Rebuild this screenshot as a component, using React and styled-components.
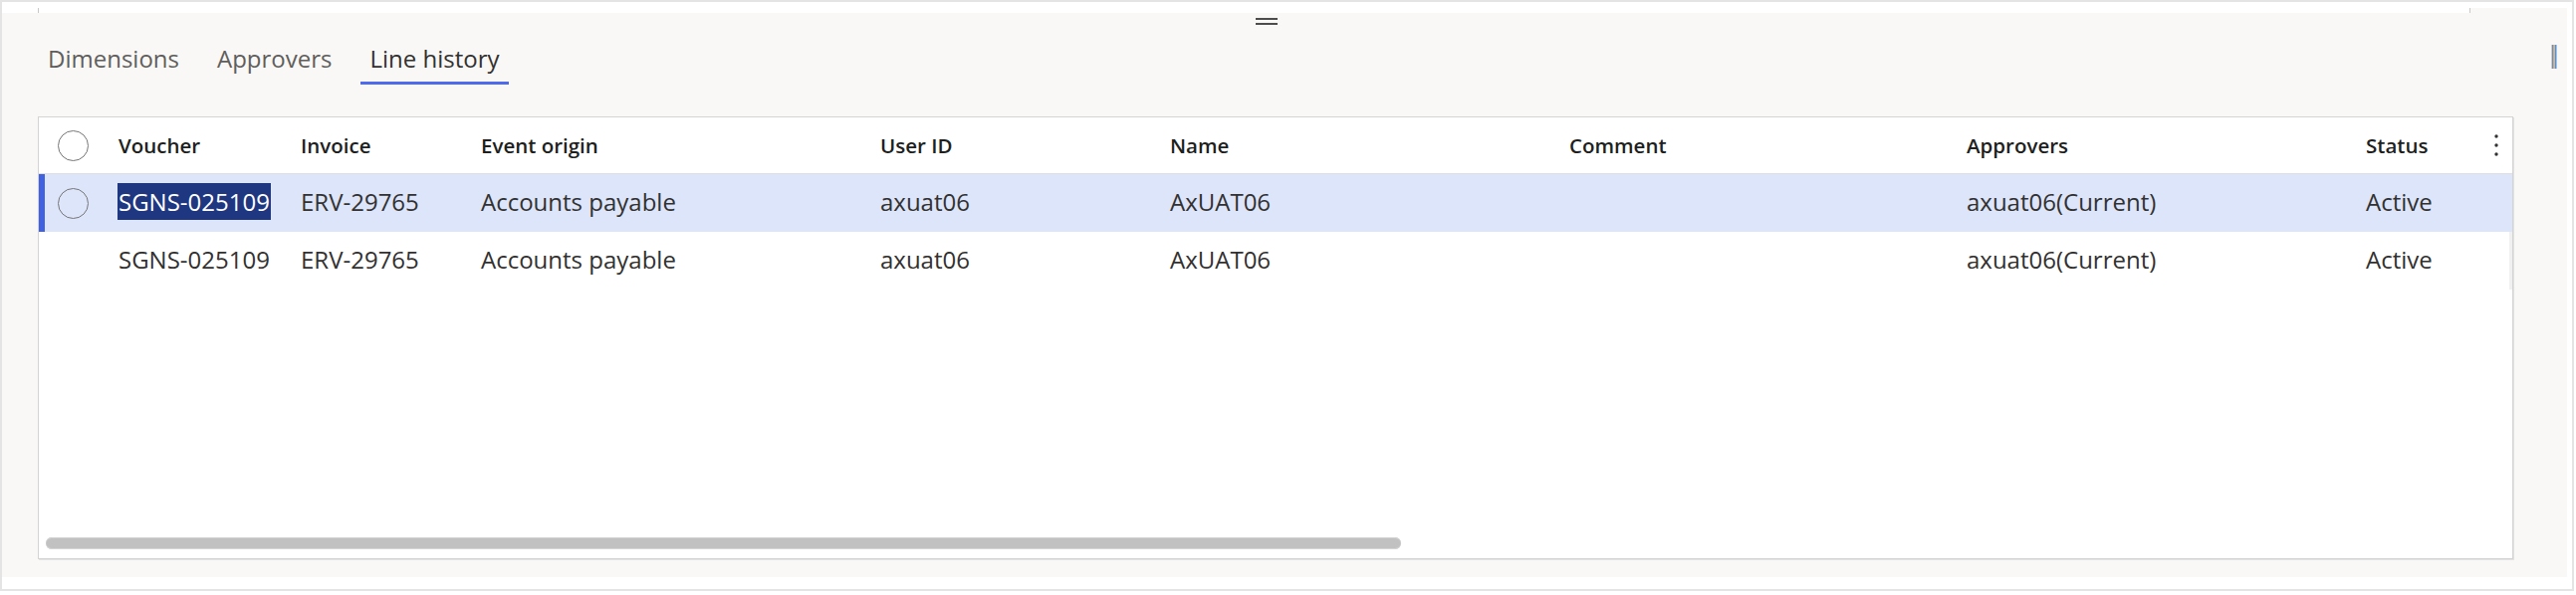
import React from 'react'
import styled, { createGlobalStyle } from 'styled-components'

const GlobalStyle = createGlobalStyle`
  body {
    margin: 0;
    background: #ffffff;
    font-family: 'Open Sans', 'Noto Sans', sans-serif;
  }
`

const Frame = styled.div`
  box-sizing: border-box;
  width: 2585px;
  height: 594px;
  border: 2px solid #e4e4e4;
  background: #ffffff;
  display: flex;
  flex-direction: column;
  padding-bottom: 12px;
`

const TopStrip = styled.div`
  height: 11px;
  display: flex;
  flex-shrink: 0;
`

const StripLead = styled.div`
  width: 36px;
  background: #ffffff;
`

const StripMid = styled.div`
  width: 2443px;
  background: #ffffff;
  display: flex;
  align-items: flex-end;
  justify-content: space-between;
`

const Tick = styled.div`
  width: 1px;
  height: 5px;
  background: #c8c8c8;
`

const StripTail = styled.div`
  flex: 1;
  margin-right: 5px;
  background: linear-gradient(#ffffff 6px, #f9f8f6 6px);
`

const Panel = styled.div`
  flex: 1;
  margin-right: 5px;
  background: #f9f8f6;
  display: flex;
  padding-left: 36px;
`

const Main = styled.div`
  width: 2486px;
  display: flex;
  flex-direction: column;
`

const Side = styled.div`
  width: 54px;
  padding: 32px 0 0 38px;
  box-sizing: border-box;
`

const HandleRow = styled.div`
  height: 25px;
  display: flex;
  justify-content: center;
  padding-right: 18px;
`

const Handle = styled.div`
  width: 22px;
  height: 3px;
  margin-top: 5px;
  border-top: 2px solid #4d4d4d;
  border-bottom: 2px solid #4d4d4d;
`

const Tabs = styled.div`
  height: 47px;
  display: flex;
  gap: 20px;
  margin-left: 1px;
`

const Tab = styled.div`
  padding: 0 9px 3px;
  height: 44px;
  box-sizing: border-box;
  display: flex;
  align-items: center;
  font-size: 24px;
  color: ${p => (p.active ? '#323130' : '#605e5c')};
  border-bottom: 3px solid ${p => (p.active ? '#4f6bed' : 'transparent')};
  box-sizing: content-box;
  height: 41px;
`

const Grid = styled.div`
  margin-top: 32px;
  margin-bottom: 18px;
  flex: 1;
  background: #ffffff;
  border: 1px solid #d4d4d4;
  box-shadow: 1px 1px 0 #e2e2e2;
  display: flex;
  flex-direction: column;
  overflow: hidden;
`

const cols = '66px 183px 181px 401px 291px 401px 399px 401px 1fr'

const HeaderRow = styled.div`
  display: grid;
  grid-template-columns: ${cols};
  height: 56px;
  border-bottom: 1px solid #e1dfdd;
  align-items: center;
  font-size: 20.5px;
  font-weight: 600;
  color: #201f1e;
`

const Row = styled.div`
  display: grid;
  grid-template-columns: ${cols};
  height: 58px;
  box-sizing: border-box;
  padding-bottom: 3px;
  align-items: center;
  font-size: 24px;
  color: #323130;
  background: ${p => (p.selected ? '#dde5fa' : '#ffffff')};
  box-shadow: ${p => (p.selected ? 'inset 6px 0 0 #4062e0' : 'inset -3px 0 0 #f0f0f0')};
`

const Cell = styled.div`
  padding-left: 14px;
  white-space: nowrap;
  display: flex;
  align-items: center;
  justify-content: ${p => (p.spread ? 'space-between' : 'flex-start')};
  padding-right: ${p => (p.spread ? '13px' : '0')};
`

const CheckCell = styled.div`
  display: flex;
  justify-content: center;
  padding-left: 2px;
  margin-top: ${p => (p.lift ? '3px' : '0')};
`

const Circle = styled.div`
  width: 31px;
  height: 31px;
  border-radius: 50%;
  border: 1.5px solid #767676;
  box-sizing: border-box;
  visibility: ${p => (p.hidden ? 'hidden' : 'visible')};
`

const Selected = styled.span`
  background: #1f3680;
  color: #ffffff;
  line-height: 37px;
  padding: 0 1px;
  margin-left: -1px;
`

const Spacer = styled.div`
  flex: 1;
`

const Scrollbar = styled.div`
  height: 12px;
  width: 1361px;
  margin: 0 0 9px 7px;
  border-radius: 6px;
  background: #c1c1c1;
  box-shadow: inset 0 1px 0 #d4d4d4, inset 0 -1px 0 #d4d4d4;
`

const MoreIcon = () => (
  <svg width="6" height="24" viewBox="0 0 6 24">
    <circle cx="3" cy="3" r="1.7" fill="#323130" />
    <circle cx="3" cy="12" r="1.7" fill="#323130" />
    <circle cx="3" cy="21" r="1.7" fill="#323130" />
  </svg>
)

const PaneIcon = () => (
  <svg width="8" height="24" viewBox="0 0 8 24">
    <rect x="0" y="0" width="1" height="24" fill="#e8c9a4" />
    <rect x="1" y="0" width="1" height="24" fill="#5f8fc8" />
    <rect x="2" y="0" width="1" height="24" fill="#9fb6d2" />
    <rect x="3" y="0" width="1" height="24" fill="#d9b48a" />
    <rect x="4" y="0" width="1" height="24" fill="#5a8fcc" />
    <rect x="5" y="0" width="1" height="24" fill="#a7c4e4" />
  </svg>
)

const rows = [
  { voucher: 'SGNS-025109', invoice: 'ERV-29765', origin: 'Accounts payable', user: 'axuat06', name: 'AxUAT06', comment: '', approvers: 'axuat06(Current)', status: 'Active', selected: true },
  { voucher: 'SGNS-025109', invoice: 'ERV-29765', origin: 'Accounts payable', user: 'axuat06', name: 'AxUAT06', comment: '', approvers: 'axuat06(Current)', status: 'Active' },
]

export default function App() {
  return (
    <>
      <GlobalStyle />
      <Frame>
        <TopStrip>
          <StripLead />
          <StripMid>
            <Tick />
            <Tick />
          </StripMid>
          <StripTail />
        </TopStrip>
        <Panel>
          <Main>
            <HandleRow>
              <Handle />
            </HandleRow>
            <Tabs>
              <Tab>Dimensions</Tab>
              <Tab>Approvers</Tab>
              <Tab active>Line history</Tab>
            </Tabs>
            <Grid>
              <HeaderRow>
                <CheckCell>
                  <Circle />
                </CheckCell>
                <Cell>Voucher</Cell>
                <Cell>Invoice</Cell>
                <Cell>Event origin</Cell>
                <Cell>User ID</Cell>
                <Cell>Name</Cell>
                <Cell>Comment</Cell>
                <Cell>Approvers</Cell>
                <Cell spread>
                  Status
                  <MoreIcon />
                </Cell>
              </HeaderRow>
              {rows.map((r, i) => (
                <Row key={i} selected={r.selected}>
                  <CheckCell lift>
                    <Circle hidden={!r.selected} />
                  </CheckCell>
                  <Cell>{r.selected ? <Selected>{r.voucher}</Selected> : r.voucher}</Cell>
                  <Cell>{r.invoice}</Cell>
                  <Cell>{r.origin}</Cell>
                  <Cell>{r.user}</Cell>
                  <Cell>{r.name}</Cell>
                  <Cell>{r.comment}</Cell>
                  <Cell>{r.approvers}</Cell>
                  <Cell>{r.status}</Cell>
                </Row>
              ))}
              <Spacer />
              <Scrollbar />
            </Grid>
          </Main>
          <Side>
            <PaneIcon />
          </Side>
        </Panel>
      </Frame>
    </>
  )
}
